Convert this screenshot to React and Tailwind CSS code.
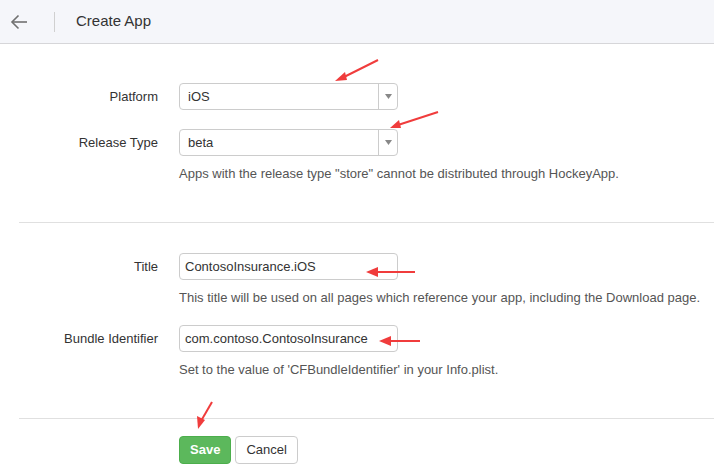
import React from "react";

function Select({ value }) {
  return (
    <div className="flex h-[27px] w-[219px] items-stretch rounded-[4px] border border-[#cccccc] bg-white">
      <div className="flex flex-1 items-center pl-[8px] text-[13px] text-[#333]">{value}</div>
      <div className="flex w-[19px] items-center justify-center border-l border-[#cccccc]">
        <svg width="7" height="5" viewBox="0 0 7 5">
          <path d="M0 0 L7 0 L3.5 5 Z" fill="#888" />
        </svg>
      </div>
    </div>
  );
}

function Input({ value }) {
  return (
    <div className="flex h-[27px] w-[219px] items-center rounded-[4px] border border-[#cccccc] bg-white pl-[5px] text-[13px] text-[#333]">
      {value}
    </div>
  );
}

function Row({ label, children, className = "" }) {
  return (
    <div className={"flex " + className}>
      <div className="flex h-[27px] w-[179px] shrink-0 items-center justify-end pr-[21px] text-[13px] text-[#333]">
        {label}
      </div>
      <div className="flex flex-col">{children}</div>
    </div>
  );
}

function Help({ children }) {
  return <div className="mt-[10px] text-[13px] leading-[16px] text-[#555] whitespace-nowrap">{children}</div>;
}

export default function App() {
  return (
    <div className="relative h-[473px] w-[714px] overflow-hidden bg-white" style={{ fontFamily: '"Liberation Sans", Arial, sans-serif' }}>
      <div className="flex h-[44px] items-center border-b border-[#d6d6d9] bg-[#f5f6fa]">
        <div className="flex w-[54px] items-center pl-[10px]">
          <svg width="18" height="16" viewBox="0 0 18 16" fill="none" stroke="#707070" strokeWidth="1.6">
            <path d="M17 8 H2" />
            <path d="M8.5 1.5 L2 8 L8.5 14.5" />
          </svg>
        </div>
        <div className="h-[20px] w-px bg-[#d0d0d0]" />
        <div className="pl-[21px] text-[15px] text-[#333]">Create App</div>
      </div>

      <div className="pt-[39px]">
        <Row label="Platform">
          <Select value="iOS" />
        </Row>
        <Row label="Release Type" className="mt-[19px]">
          <Select value="beta" />
          <Help>Apps with the release type "store" cannot be distributed through HockeyApp.</Help>
        </Row>
        <div className="ml-[19px] mt-[40px] h-px bg-[#e0e0e0]" />
        <Row label="Title" className="mt-[30px]">
          <Input value="ContosoInsurance.iOS" />
          <Help>This title will be used on all pages which reference your app, including the Download page.</Help>
        </Row>
        <Row label="Bundle Identifier" className="mt-[19px]">
          <Input value="com.contoso.ContosoInsurance" />
          <Help>Set to the value of 'CFBundleIdentifier' in your Info.plist.</Help>
        </Row>
        <div className="ml-[19px] mt-[40px] h-px bg-[#e0e0e0]" />
        <div className="mt-[17px] flex gap-[4px] pl-[179px]">
          <button className="h-[28px] rounded-[4px] border border-[#4cae4c] bg-[#5cb85c] px-[10px] text-[13px] font-bold text-white">
            Save
          </button>
          <button className="h-[28px] rounded-[4px] border border-[#cccccc] bg-white px-[10px] text-[13px] text-[#333]">
            Cancel
          </button>
        </div>
      </div>

      <svg className="pointer-events-none absolute left-0 top-0" width="714" height="473">
        <g stroke="#f03c3c" strokeWidth="2" fill="#f03c3c">
          <line x1="378" y1="60" x2="342" y2="78" />
          <path d="M335 81 L345 72 L347 80 Z" stroke="none" />
          <line x1="438" y1="112" x2="398" y2="125" />
          <path d="M390 128 L399 120 L401 128 Z" stroke="none" />
          <line x1="415" y1="272" x2="375" y2="272" />
          <path d="M366 272 L378 267 L378 277 Z" stroke="none" />
          <line x1="420" y1="341" x2="388" y2="341" />
          <path d="M379 341 L391 336 L391 346 Z" stroke="none" />
          <line x1="212" y1="402" x2="201" y2="421" />
          <path d="M198 429 L197 416 L205 420 Z" stroke="none" />
        </g>
      </svg>
    </div>
  );
}
